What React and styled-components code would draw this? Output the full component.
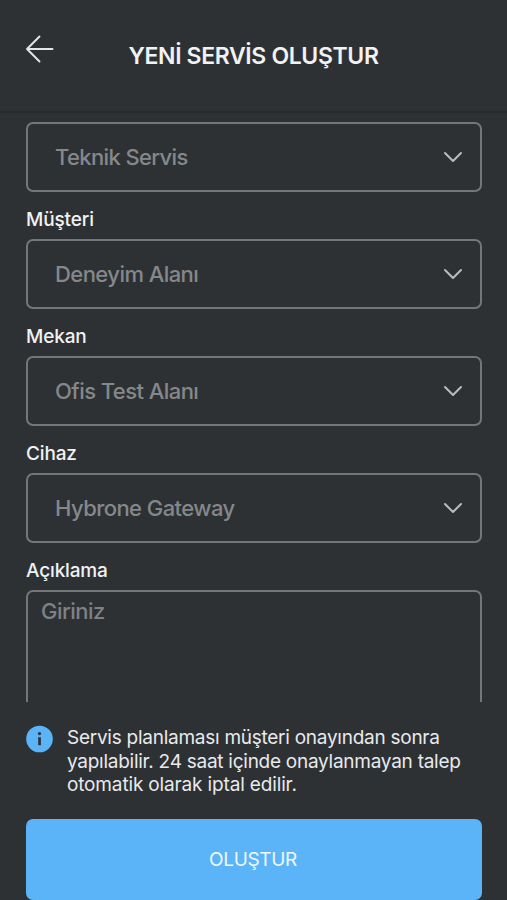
import React, { useState } from 'react';
import styled, { createGlobalStyle } from 'styled-components';

const GlobalStyle = createGlobalStyle`
    * {
        box-sizing: border-box;
    }

    body {
        margin: 0;
        background: #2e3134;
        font-family: Inter, "Liberation Sans", sans-serif;
    }
`;

const Screen = styled.div`
    display: flex;
    flex-direction: column;
    width: 507px;
    height: 900px;
    overflow: hidden;
    background: #2e3134;
    color: #f0f2f4;
`;

const Header = styled.header`
    display: grid;
    grid-template-columns: 28px 1fr 28px;
    flex: none;
    height: 113px;
    padding: 35px 25px 0 25px;
    border-bottom: 2px solid #27292c;
`;

const BackButton = styled.button`
    width: 29px;
    height: 28px;
    padding: 0;
    border: none;
    background: none;
    cursor: pointer;

    svg {
        display: block;
    }
`;

const Title = styled.h1`
    margin: 6px 0 0;
    font-size: 23px;
    line-height: 30px;
    font-weight: 600;
    letter-spacing: -0.36px;
    text-align: center;
    white-space: nowrap;
`;

const Form = styled.form`
    flex: none;
    height: 589px;
    padding: 9px 25px 0 26px;
    overflow: hidden;
`;

const Label = styled.label`
    display: block;
    height: 47px;
    padding-top: 15px;
    font-size: 19px;
    line-height: 26px;
    font-weight: 500;
    letter-spacing: -0.15px;
`;

const SelectBox = styled.button`
    display: flex;
    align-items: center;
    justify-content: space-between;
    width: 100%;
    height: 70px;
    padding: 0 17px 0 27px;
    border: 2px solid #74777a;
    border-radius: 7px;
    background: none;
    color: #85888b;
    font-family: inherit;
    font-size: 22px;
    font-weight: 500;
    letter-spacing: ${props => props.$tight ? '-0.62px' : '-0.56px'};
    cursor: pointer;
`;

const Description = styled.textarea`
    display: block;
    width: 100%;
    height: 180px;
    padding: 5px 13px;
    border: 2px solid #74777a;
    border-radius: 7px;
    outline: none;
    resize: none;
    background: none;
    color: #f0f2f4;
    font-family: inherit;
    font-size: 22px;
    font-weight: 500;
    line-height: 28px;
    letter-spacing: -0.5px;

    &::placeholder {
        color: #7f8285;
        opacity: 1;
    }
`;

const Notice = styled.div`
    display: flex;
    gap: 14px;
    flex: none;
    height: 117px;
    padding: 23px 25px 0 26px;

    svg {
        flex: none;
    }
`;

const NoticeText = styled.p`
    margin: 1px 0 0;
    color: #e8eaec;
    font-size: 19px;
    line-height: 23.5px;
    letter-spacing: -0.26px;
    white-space: nowrap;
`;

const LastLine = styled.span`
    letter-spacing: -0.15px;
`;

const SubmitButton = styled.button`
    flex: none;
    height: 81px;
    margin: 0 25px 0 26px;
    padding: 0 8px 0 6px;
    border: none;
    border-radius: 7px;
    background: #5bb4f7;
    color: #f0f8ff;
    font-family: inherit;
    font-size: 19px;
    letter-spacing: -0.35px;
    cursor: pointer;
`;

const BackIcon = () => (
    <svg width="29" height="28" viewBox="0 0 29 28" fill="none" stroke="#e4e6e8" strokeWidth="1.9" strokeLinecap="round" strokeLinejoin="round">
        <path d="M14.5 1.5L2 14L14.5 26.5M2 14H27.5" />
    </svg>
);

const ChevronIcon = () => (
    <svg width="20" height="12" viewBox="0 0 20 12" fill="none" stroke="#b9bcbf" strokeWidth="2" strokeLinecap="round" strokeLinejoin="round">
        <path d="M2 2L10 10L18 2" />
    </svg>
);

const InfoIcon = () => (
    <svg width="27" height="28" viewBox="0 0 27 28">
        <circle cx="13.5" cy="14" r="13.3" fill="#5bb4f7" />
        <circle cx="13.5" cy="8.6" r="1.6" fill="#2e3134" />
        <path d="M12 12.2H14.9V20.3H12.2V13.2H12Z" fill="#2e3134" />
    </svg>
);

const fields = [
    { id: 'service', value: 'Teknik Servis', tight: true },
    { id: 'customer', label: 'Müşteri', value: 'Deneyim Alanı' },
    { id: 'place', label: 'Mekan', value: 'Ofis Test Alanı' },
    { id: 'device', label: 'Cihaz', value: 'Hybrone Gateway' },
];

const App = () => {
    const [description, setDescription] = useState('');

    return (
        <>
            <GlobalStyle />
            <Screen>
                <Header>
                    <BackButton type="button"><BackIcon /></BackButton>
                    <Title>YENİ SERVİS OLUŞTUR</Title>
                </Header>

                <Form>
                    {fields.map(field => (
                        <React.Fragment key={field.id}>
                            {field.label && <Label htmlFor={field.id}>{field.label}</Label>}
                            <SelectBox id={field.id} type="button" $tight={field.tight}>
                                {field.value}
                                <ChevronIcon />
                            </SelectBox>
                        </React.Fragment>
                    ))}
                    <Label htmlFor="description">Açıklama</Label>
                    <Description
                        id="description"
                        value={description}
                        onChange={(event) => setDescription(event.target.value)}
                        placeholder="Giriniz"
                    />
                </Form>

                <Notice>
                    <InfoIcon />
                    <NoticeText>
                        Servis planlaması müşteri onayından sonra<br />
                        yapılabilir. 24 saat içinde onaylanmayan talep<br />
                        <LastLine>otomatik olarak iptal edilir.</LastLine>
                    </NoticeText>
                </Notice>
                <SubmitButton type="button">OLUŞTUR</SubmitButton>
            </Screen>
        </>
    );
};

export default App;
